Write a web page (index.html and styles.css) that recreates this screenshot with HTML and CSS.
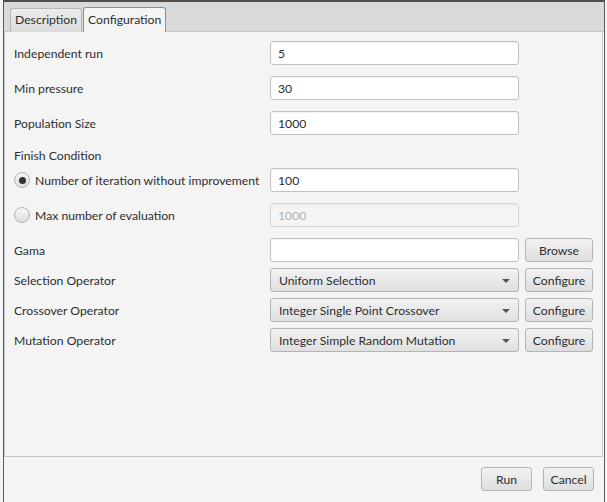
FILE: index.html
```html
<!DOCTYPE html>
<html>
<head>
<meta charset="utf-8">
<link rel="stylesheet" href="styles.css">
</head>
<body>
<div class="window">
  <div class="tab-header">
    <div class="tab">Description</div>
    <div class="tab selected">Configuration</div>
  </div>
  <div class="content">
    <div class="row gap11">
      <div class="label">Independent run</div>
      <div class="field">5</div>
    </div>
    <div class="row gap11">
      <div class="label">Min pressure</div>
      <div class="field">30</div>
    </div>
    <div class="row gap11">
      <div class="label">Population Size</div>
      <div class="field">1000</div>
    </div>
    <div class="section">Finish Condition</div>
    <div class="row gap11">
      <div class="label radio-label"><span class="radio checked"></span>Number of iteration without improvement</div>
      <div class="field">100</div>
    </div>
    <div class="row gap11">
      <div class="label radio-label"><span class="radio"></span>Max number of evaluation</div>
      <div class="field disabled">1000</div>
    </div>
    <div class="row gap6">
      <div class="label">Gama</div>
      <div class="field"></div>
      <div class="button side">Browse</div>
    </div>
    <div class="row gap6">
      <div class="label">Selection Operator</div>
      <div class="combo">Uniform Selection<span class="arrow"></span></div>
      <div class="button side">Configure</div>
    </div>
    <div class="row gap6">
      <div class="label">Crossover Operator</div>
      <div class="combo">Integer Single Point Crossover<span class="arrow"></span></div>
      <div class="button side">Configure</div>
    </div>
    <div class="row">
      <div class="label">Mutation Operator</div>
      <div class="combo">Integer Simple Random Mutation<span class="arrow"></span></div>
      <div class="button side">Configure</div>
    </div>
  </div>
  <div class="button-bar">
    <div class="button bottom">Run</div>
    <div class="button bottom">Cancel</div>
  </div>
</div>
</body>
</html>
```
FILE: styles.css
```css
* { box-sizing: border-box; }
html, body {
  margin: 0;
  padding: 0;
  width: 607px;
  height: 502px;
  background: #f4f4f4;
  font-family: "Lato", "Open Sans", sans-serif;
  font-size: 12.2px;
  color: #2e2e2e;
  overflow: hidden;
  white-space: nowrap;
}
.window {
  margin-left: 3px;
  width: 602px;
  height: 502px;
  border-top: 2px solid #4f4f4f;
  border-left: 1px solid #5a5a5a;
  border-right: 1px solid #5a5a5a;
  display: flex;
  flex-direction: column;
  background: #f4f4f4;
}
.tab-header {
  height: 30px;
  background: #dadada;
  border-bottom: 1px solid #c6c6c6;
  display: flex;
  align-items: flex-end;
  padding-left: 6px;
  gap: 1px;
}
.tab {
  height: 24px;
  padding: 0 4px;
  border: 1px solid #b6b6b6;
  border-bottom: none;
  border-radius: 3px 3px 0 0;
  background: linear-gradient(#ececec, #dcdcdc);
  display: flex;
  align-items: center;
  margin-bottom: -1px;
  line-height: 1;
}
.tab.selected {
  background: #f4f4f4;
  border-color: #4aa3df;
  height: 25px;
  padding: 0 4px;
}
.content {
  flex: 1;
  border-left: 1px solid #c9c9c9;
  border-right: 1px solid #c9c9c9;
  border-bottom: 1px solid #c4c4c4;
  margin-right: 1px;
  padding: 9px 0 0 9px;
  display: flex;
  flex-direction: column;
}
.row {
  display: flex;
  align-items: center;
  height: 24px;
}
.gap11 { margin-bottom: 11px; }
.gap6 { margin-bottom: 6px; }
.label {
  width: 256px;
  flex: none;
  display: flex;
  align-items: center;
}
.section {
  height: 18px;
  margin-bottom: 4px;
  display: flex;
  align-items: center;
}
.radio {
  width: 16px;
  height: 16px;
  flex: none;
  border-radius: 50%;
  border: 1px solid #b4b4b4;
  background: linear-gradient(#f6f6f6, #dedede);
  margin-right: 5px;
  display: inline-flex;
  align-items: center;
  justify-content: center;
}
.radio.checked::after {
  content: "";
  width: 7px;
  height: 7px;
  border-radius: 50%;
  background: #333333;
}
.field {
  width: 249px;
  flex: none;
  height: 24px;
  border: 1px solid #c2c2c2;
  border-radius: 3px;
  background: #ffffff;
  box-shadow: inset 0 1px 1px rgba(0,0,0,0.05);
  padding: 0 7px;
  display: flex;
  align-items: center;
}
.field.disabled {
  background: #f5f5f5;
  border-color: #d6d6d6;
  color: #b0b0b0;
}
.combo {
  width: 249px;
  flex: none;
  height: 24px;
  border: 1px solid #b4b4b4;
  border-radius: 3px;
  background: linear-gradient(#f2f2f2, #e0e0e0);
  padding: 0 8px;
  display: flex;
  align-items: center;
  position: relative;
}
.arrow {
  position: absolute;
  right: 8px;
  top: 10px;
  width: 0;
  height: 0;
  border-left: 4px solid transparent;
  border-right: 4px solid transparent;
  border-top: 4px solid #555555;
}
.button {
  height: 24px;
  border: 1px solid #b4b4b4;
  border-radius: 3px;
  background: linear-gradient(#f2f2f2, #dedede);
  display: flex;
  align-items: center;
  justify-content: center;
}
.button.side {
  width: 68px;
  flex: none;
  margin-left: 6px;
}
.button-bar {
  height: 45px;
  display: flex;
  justify-content: flex-end;
  align-items: flex-start;
  padding: 10px 10px 0 0;
  gap: 11px;
}
.button.bottom {
  width: 51px;
}
```
